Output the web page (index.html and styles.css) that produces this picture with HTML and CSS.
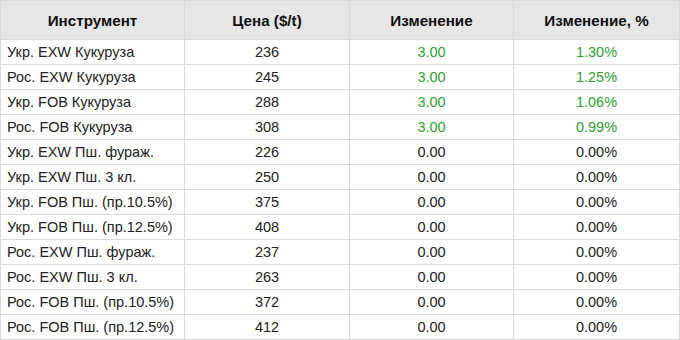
FILE: index.html
```html
<!DOCTYPE html>
<html lang="ru">
<head>
<meta charset="utf-8">
<link rel="stylesheet" href="styles.css">
</head>
<body>
<table class="quotes">
  <colgroup>
    <col class="c1"><col class="c2"><col class="c3"><col class="c4">
  </colgroup>
  <thead>
    <tr><th>Инструмент</th><th>Цена ($/t)</th><th>Изменение</th><th>Изменение, %</th></tr>
  </thead>
  <tbody>
    <tr><td class="name">Укр. EXW Кукуруза</td><td>236</td><td class="up">3.00</td><td class="up">1.30%</td></tr>
    <tr><td class="name">Рос. EXW Кукуруза</td><td>245</td><td class="up">3.00</td><td class="up">1.25%</td></tr>
    <tr><td class="name">Укр. FOB Кукуруза</td><td>288</td><td class="up">3.00</td><td class="up">1.06%</td></tr>
    <tr><td class="name">Рос. FOB Кукуруза</td><td>308</td><td class="up">3.00</td><td class="up">0.99%</td></tr>
    <tr><td class="name">Укр. EXW Пш. фураж.</td><td>226</td><td>0.00</td><td>0.00%</td></tr>
    <tr><td class="name">Укр. EXW Пш. 3 кл.</td><td>250</td><td>0.00</td><td>0.00%</td></tr>
    <tr><td class="name">Укр. FOB Пш. (пр.10.5%)</td><td>375</td><td>0.00</td><td>0.00%</td></tr>
    <tr><td class="name">Укр. FOB Пш. (пр.12.5%)</td><td>408</td><td>0.00</td><td>0.00%</td></tr>
    <tr><td class="name">Рос. EXW Пш. фураж.</td><td>237</td><td>0.00</td><td>0.00%</td></tr>
    <tr><td class="name">Рос. EXW Пш. 3 кл.</td><td>263</td><td>0.00</td><td>0.00%</td></tr>
    <tr><td class="name">Рос. FOB Пш. (пр.10.5%)</td><td>372</td><td>0.00</td><td>0.00%</td></tr>
    <tr><td class="name">Рос. FOB Пш. (пр.12.5%)</td><td>412</td><td>0.00</td><td>0.00%</td></tr>
  </tbody>
</table>
</body>
</html>
```
FILE: styles.css
```css
html, body {
  margin: 0;
  padding: 0;
  background: #ffffff;
}
.quotes {
  border-collapse: collapse;
  table-layout: fixed;
  width: 679px;
  font-family: "Liberation Sans", Arial, sans-serif;
  font-size: 14.5px;
  color: #222222;
}
.c1 { width: 184px; }
.c2 { width: 165px; }
.c3 { width: 164px; }
.c4 { width: 166px; }
.quotes th,
.quotes td {
  border: 1px solid #d9d9d9;
  padding: 0 6px;
  text-align: center;
  white-space: nowrap;
}
.quotes th {
  background: #e6e6e6;
  font-size: 15.2px;
  font-weight: bold;
  color: #111111;
  height: 38px;
}
.quotes td {
  height: 24px;
}
.quotes td.name {
  text-align: left;
}
.quotes td.up {
  color: #2e9e2e;
}
```
